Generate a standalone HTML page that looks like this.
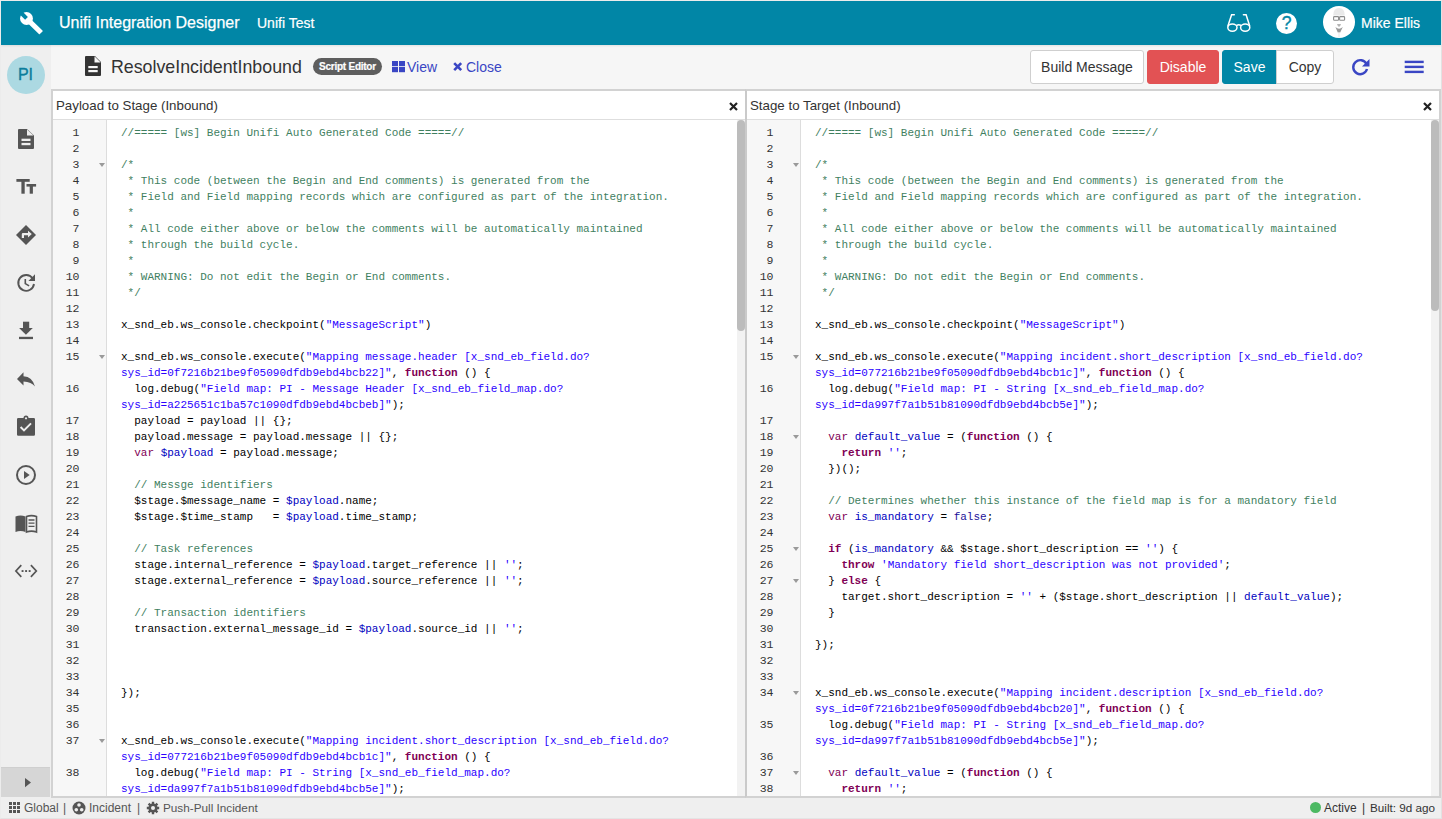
<!DOCTYPE html>
<html><head><meta charset="utf-8">
<style>
*{box-sizing:border-box;margin:0;padding:0}
html,body{width:1442px;height:819px;overflow:hidden;background:#efefef;font-family:"Liberation Sans",sans-serif;color:#333}
.abs{position:absolute}
#frame{position:absolute;left:0;top:0;width:1442px;height:819px;border:1px solid #ececec;border-right-color:#e2e2e2;border-bottom-color:#e4e4e4;pointer-events:none;z-index:50}
#hdr{position:absolute;left:1px;top:1px;width:1440px;height:44px;background:#0186a6;color:#fff;box-shadow:0 1px 2px rgba(0,0,0,0.09);z-index:5}
#hdr .t1{position:absolute;left:58px;top:13px;font-size:16px;white-space:nowrap;-webkit-text-stroke:0.25px #fff}
#hdr .t2{position:absolute;left:256px;top:14px;font-size:14px;white-space:nowrap;-webkit-text-stroke:0.2px #fff}
#hdr .me{position:absolute;left:1360px;top:14px;font-size:14px;white-space:nowrap;-webkit-text-stroke:0.2px #fff}
#side{position:absolute;left:1px;top:45px;width:50px;height:753px;background:#efefef}
#side .pi{position:absolute;left:5.5px;top:11px;width:38px;height:38px;border-radius:50%;background:#acd9e2;color:#0c7e9c;font-size:16px;text-align:center;line-height:37px;-webkit-text-stroke:0.35px #0c7e9c}
#side .tog{position:absolute;left:0;top:722px;width:49px;height:30px;background:#d6d6d6;border-top:1px solid #cfcfcf}
#tb{position:absolute;left:51px;top:45px;width:1390px;height:44px;background:#f6f6f6}
.docname{position:absolute;left:60px;top:12px;font-size:17.8px;color:#333;white-space:nowrap}
.badge{position:absolute;left:262px;top:13px;width:69px;height:17px;border-radius:9px;background:#5e5e5e;color:#fff;font-weight:bold;font-size:10px;text-align:center;line-height:18px;letter-spacing:-0.25px;-webkit-text-stroke:0.2px #fff}
.lnk{position:absolute;top:14px;font-size:14px;color:#3a46c4;white-space:nowrap}
.btn{position:absolute;top:5px;height:34px;font-size:14px;line-height:32px;text-align:center;border:1px solid #cfcfcf;border-radius:3px;background:#fff;color:#333;white-space:nowrap}
.panel{position:absolute;top:89px;height:709px;background:#fff;border:2px solid #d2d2d2}
.ph{position:absolute;left:0;top:0;right:0;height:29px;border-bottom:1px solid #dedede;background:#fff}
.ph .pt{position:absolute;left:3px;top:7px;font-size:13.3px;color:#333;white-space:nowrap}
.ph .px{position:absolute;top:11px;width:9px;height:9px}
.ed{position:absolute;left:0;top:29px;right:0;bottom:0;overflow:hidden;background:#fff}
.gut{position:absolute;left:0;top:0;width:54px;bottom:0;background:#f7f7f7;border-right:1px solid #ddd}
.gi{position:absolute;left:0;top:5px;width:53px}
.gl{height:16px;position:relative}
.ln{position:absolute;right:27px;top:0;font-family:"Liberation Mono",monospace;font-size:11.5px;letter-spacing:-0.3px;line-height:16px;color:#333}
.fd{position:absolute;left:45.5px;top:5.5px;width:0;height:0;border-left:3px solid transparent;border-right:3px solid transparent;border-top:4.5px solid #9a9a9a}
.code{position:absolute;left:68px;top:5px;font-family:"Liberation Mono",monospace;font-size:11px;line-height:16px;color:#000}
.cl{height:16px;white-space:pre}
.c{color:#3f7f5f}.s{color:#2a00ff}.k{color:#7f0055;font-weight:bold}.kv{color:#7f0055}.a{color:#221199}.v{color:#0000c0}
.sb{position:absolute;top:0;width:8px;bottom:0;background:#f2f2f2}
.thumb{position:absolute;left:0;width:8px;background:#bcbcbc;border-radius:4px}
#status{position:absolute;left:1px;top:798px;width:1440px;height:20px;background:#efefef;font-size:12px;color:#555;white-space:nowrap}
</style></head>
<body>
<div id="frame"></div>

<div id="hdr">
  <svg class="abs" style="left:0;top:0" width="60" height="44" viewBox="1 1 60 44"><defs><mask id="wm"><rect x="0" y="0" width="60" height="44" fill="#fff"/><path d="M27.9 16.9 L22.2 11.2 L19.4 14.0 L25.1 19.7 Z" fill="#000"/></mask></defs><g fill="#fff" mask="url(#wm)"><circle cx="26.5" cy="18.5" r="6.45"/><path d="M28.3 16.7 L42.5 30.4 Q43 30.9 42.5 31.4 L39.9 33.9 Q39.4 34.4 38.9 33.9 L24.7 20.3 Z"/></g></svg>
  <div class="t1">Unifi Integration Designer</div>
  <div class="t2">Unifi Test</div>
  <svg class="abs" style="left:1225px;top:12px" width="28" height="22" viewBox="1226 13 28 22"><g fill="none" stroke="#fff" stroke-width="1.5" stroke-linecap="round"><ellipse cx="1232.4" cy="27.6" rx="4.6" ry="3.6"/><ellipse cx="1245.2" cy="27.6" rx="4.6" ry="3.6"/><path d="M1236.9 25.2 Q1238.8 24.3 1240.7 25.2"/><path d="M1227.9 26 L1231.6 14.8 h2.7"/><path d="M1249.7 26 L1246.1 14.8 h-2.7"/></g></svg>
  <div class="abs" style="left:1275px;top:12px;width:21px;height:21px;border-radius:50%;background:#fff;color:#0186a6;font-size:17.5px;text-align:center;line-height:21px;-webkit-text-stroke:0.35px #0186a6">?</div>
  <svg class="abs" style="left:1321px;top:4px" width="34" height="34" viewBox="1322 5 34 34"><circle cx="1339" cy="22" r="16" fill="#fff"/><path d="M1333.2 15.4 Q1333.4 8 1339 8 Q1344.6 8 1344.8 15.4 Z" fill="#e9e9e9"/><g fill="none" stroke="#8c8c8c" stroke-width="1.1"><rect x="1333.6" y="16.6" width="5" height="3.7" rx="0.8"/><rect x="1339.6" y="16.6" width="5" height="3.7" rx="0.8"/></g><path d="M1337 24 h4 l-1.1 2.6 h-1.8z" fill="#b4b4b4"/><path d="M1335.4 27 Q1339 30.4 1342.8 27 L1340.2 32.4 h-2.4 Z" fill="#9a9a9a"/><rect x="1338.4" y="32.4" width="1.2" height="5" fill="#ececec"/></svg>
  <div class="me">Mike Ellis</div>
</div>

<div id="side">
  <div class="pi">PI</div>
  <svg class="abs" style="left:0;top:0" width="50" height="753" viewBox="1 45 50 753">
    <g fill="#555">
      <!-- doc -->
      <path d="M18 130 q0 -1 1 -1 h8 l7 6.5 v12.5 q0 1 -1 1 h-14 q-1 0 -1 -1z M27 129.5 v6 h6.5z" fill-rule="evenodd"/>
      <rect x="21.5" y="138.7" width="9" height="2.3" fill="#efefef"/>
      <rect x="21.5" y="142.9" width="9" height="2.3" fill="#efefef"/>
      <!-- Tt -->
      <rect x="16.4" y="179" width="13.3" height="2.8"/>
      <rect x="21.4" y="179" width="3.3" height="14.7"/>
      <rect x="26.5" y="184" width="9.6" height="2.6"/>
      <rect x="29.7" y="184" width="3.2" height="9.7"/>
      <!-- diamond -->
      <path d="M26 225 L36 235 L26 245 L16 235z"/>
      <path d="M21.8 238 V234.2 Q21.8 233 23 233 H28 V230.8 L31.8 234.1 L28 237.4 V235.2 H24 V238 Z" fill="#efefef"/>
      <!-- history -->
      <path d="M32.6 278.3 A7.9 7.9 0 1 0 34 284" fill="none" stroke="#555" stroke-width="1.9"/>
      <path d="M35 274.3 v6.6 h-6.6z"/>
      <path d="M25.3 279 v4.6 l3.8 2.3" fill="none" stroke="#555" stroke-width="1.6"/>
      <!-- download -->
      <rect x="23" y="321.7" width="6.2" height="7"/>
      <path d="M19.1 328 h13.7 l-6.85 6.7z"/>
      <rect x="19" y="336.8" width="14" height="2.3"/>
      <!-- reply -->
      <path d="M17 379 L23.5 372.2 v4 q9 0.5 11.5 10.4 q-3.5 -4.6 -11.5 -5 v4z"/>
      <!-- clipboard -->
      <path d="M18.2 418 h5.3 a2.5 2.5 0 0 1 5 0 h5.3 q1.2 0 1.2 1.2 v15.4 q0 1.2 -1.2 1.2 h-15.6 q-1.2 0 -1.2 -1.2 v-15.4 q0 -1.2 1.2 -1.2z"/>
      <circle cx="26" cy="418.3" r="1.1" fill="#efefef"/>
      <path d="M20.6 427 l3.4 3.4 l7 -7" fill="none" stroke="#efefef" stroke-width="2"/>
      <!-- play -->
      <circle cx="26" cy="475" r="9" fill="none" stroke="#555" stroke-width="2"/>
      <path d="M24 471 v8 l5.7 -4z"/>
      <!-- book -->
      <path d="M15.5 516.5 q5 -1.8 10 0 v15.5 q-5 -1.8 -10 0z"/>
      <path d="M26.5 516.5 q5 -1.8 10 0 v15.5 q-5 -1.8 -10 0z" fill="none" stroke="#555" stroke-width="1.6"/>
      <path d="M28.5 520 h6 M28.5 523.2 h6 M28.5 526.4 h6" stroke="#555" stroke-width="1.3"/>
      <!-- code -->
      <path d="M21.3 565.2 l-5.4 5.8 l5.4 5.8 M30.9 565.2 l5.4 5.8 l-5.4 5.8" fill="none" stroke="#555" stroke-width="1.7"/>
      <rect x="21.6" y="570.1" width="1.9" height="1.9"/><rect x="25.15" y="570.1" width="1.9" height="1.9"/><rect x="28.7" y="570.1" width="1.9" height="1.9"/>
    </g>
  </svg>
  <div class="tog"><svg class="abs" style="left:24px;top:10px" width="7" height="10" viewBox="0 0 7 10"><path d="M0 0 L6 4.6 L0 9.2z" fill="#555"/></svg></div>
</div>

<div id="tb">
  <svg class="abs" style="left:33px;top:10px" width="18" height="22" viewBox="0 0 18 22"><path d="M1 2 q0 -1 1 -1 h9 l6 6 v13 q0 1 -1 1 h-14 q-1 0 -1 -1z M10.5 1.3 v6.2 h6.2z" fill="#333" fill-rule="evenodd"/><rect x="4.3" y="11" width="9.4" height="2.2" fill="#f6f6f6"/><rect x="4.3" y="15" width="9.4" height="2.2" fill="#f6f6f6"/></svg>
  <div class="docname">ResolveIncidentInbound</div>
  <div class="badge">Script Editor</div>
  <svg class="abs" style="left:341px;top:16px" width="14" height="12" viewBox="0 0 14 12"><g fill="#3a46c4"><rect x="0" y="0" width="6" height="5.2"/><rect x="7" y="0" width="6" height="5.2"/><rect x="0" y="6" width="6" height="5.2"/><rect x="7" y="6" width="6" height="5.2"/></g></svg>
  <div class="lnk" style="left:356px">View</div>
  <svg class="abs" style="left:402px;top:17px" width="10" height="10" viewBox="0 0 10 10"><path d="M1.2 1.2 L8.2 8.2 M8.2 1.2 L1.2 8.2" stroke="#3a46c4" stroke-width="2.6"/></svg>
  <div class="lnk" style="left:415px">Close</div>
  <div class="btn" style="left:979px;width:114px">Build Message</div>
  <div class="btn" style="left:1096px;width:72px;background:#e25254;border-color:#e25254;color:#fff">Disable</div>
  <div class="btn" style="left:1171px;width:55px;background:#0186a6;border-color:#0186a6;color:#fff;border-radius:3px 0 0 3px">Save</div>
  <div class="btn" style="left:1225px;width:58px;border-radius:0 3px 3px 0">Copy</div>
  <svg class="abs" style="left:1300px;top:12px" width="20" height="20" viewBox="0 0 20 20"><path d="M15.5 7 A7 7 0 1 0 16 12" fill="none" stroke="#3a46c4" stroke-width="2.4"/><path d="M18.5 2 v7.5 h-7.5z" fill="#3a46c4"/></svg>
  <svg class="abs" style="left:1353px;top:15px" width="20" height="14" viewBox="0 0 20 14"><g fill="#3a46c4"><rect x="0.7" y="0.7" width="19" height="2.4"/><rect x="0.7" y="5.7" width="19" height="2.4"/><rect x="0.7" y="10.7" width="19" height="2.4"/></g></svg>
</div>

<!-- left panel -->
<div class="panel" style="left:51px;width:696px;border-right:0">
  <div class="ph"><div class="pt">Payload to Stage (Inbound)</div>
    <svg class="px" style="left:676px" viewBox="0 0 9 9"><path d="M1 1 L8 8 M8 1 L1 8" stroke="#222" stroke-width="2.2"/></svg></div>
  <div class="ed">
    <div class="gut"><div class="gi">
<div class="gl"><span class="ln">1</span></div>
<div class="gl"><span class="ln">2</span></div>
<div class="gl"><span class="ln">3</span><i class="fd"></i></div>
<div class="gl"><span class="ln">4</span></div>
<div class="gl"><span class="ln">5</span></div>
<div class="gl"><span class="ln">6</span></div>
<div class="gl"><span class="ln">7</span></div>
<div class="gl"><span class="ln">8</span></div>
<div class="gl"><span class="ln">9</span></div>
<div class="gl"><span class="ln">10</span></div>
<div class="gl"><span class="ln">11</span></div>
<div class="gl"><span class="ln">12</span></div>
<div class="gl"><span class="ln">13</span></div>
<div class="gl"><span class="ln">14</span></div>
<div class="gl"><span class="ln">15</span><i class="fd"></i></div>
<div class="gl"></div>
<div class="gl"><span class="ln">16</span></div>
<div class="gl"></div>
<div class="gl"><span class="ln">17</span></div>
<div class="gl"><span class="ln">18</span></div>
<div class="gl"><span class="ln">19</span></div>
<div class="gl"><span class="ln">20</span></div>
<div class="gl"><span class="ln">21</span></div>
<div class="gl"><span class="ln">22</span></div>
<div class="gl"><span class="ln">23</span></div>
<div class="gl"><span class="ln">24</span></div>
<div class="gl"><span class="ln">25</span></div>
<div class="gl"><span class="ln">26</span></div>
<div class="gl"><span class="ln">27</span></div>
<div class="gl"><span class="ln">28</span></div>
<div class="gl"><span class="ln">29</span></div>
<div class="gl"><span class="ln">30</span></div>
<div class="gl"><span class="ln">31</span></div>
<div class="gl"><span class="ln">32</span></div>
<div class="gl"><span class="ln">33</span></div>
<div class="gl"><span class="ln">34</span></div>
<div class="gl"><span class="ln">35</span></div>
<div class="gl"><span class="ln">36</span></div>
<div class="gl"><span class="ln">37</span><i class="fd"></i></div>
<div class="gl"></div>
<div class="gl"><span class="ln">38</span></div>
<div class="gl"></div>
    </div></div>
    <div class="code">
<div class="cl"><span class="c">//===== [ws] Begin Unifi Auto Generated Code =====//</span></div>
<div class="cl">&#8203;</div>
<div class="cl"><span class="c">/*</span></div>
<div class="cl"><span class="c"> * This code (between the Begin and End comments) is generated from the</span></div>
<div class="cl"><span class="c"> * Field and Field mapping records which are configured as part of the integration.</span></div>
<div class="cl"><span class="c"> *</span></div>
<div class="cl"><span class="c"> * All code either above or below the comments will be automatically maintained</span></div>
<div class="cl"><span class="c"> * through the build cycle.</span></div>
<div class="cl"><span class="c"> *</span></div>
<div class="cl"><span class="c"> * WARNING: Do not edit the Begin or End comments.</span></div>
<div class="cl"><span class="c"> */</span></div>
<div class="cl">&#8203;</div>
<div class="cl">x_snd_eb.ws_console.checkpoint(<span class="s">&quot;MessageScript&quot;</span>)</div>
<div class="cl">&#8203;</div>
<div class="cl">x_snd_eb.ws_console.execute(<span class="s">&quot;Mapping message.header [x_snd_eb_field.do?</span></div>
<div class="cl"><span class="s">sys_id=0f7216b21be9f05090dfdb9ebd4bcb22]&quot;</span>, <span class="k">function</span> () {</div>
<div class="cl">  log.debug(<span class="s">&quot;Field map: PI - Message Header [x_snd_eb_field_map.do?</span></div>
<div class="cl"><span class="s">sys_id=a225651c1ba57c1090dfdb9ebd4bcbeb]&quot;</span>);</div>
<div class="cl">  payload = payload || {};</div>
<div class="cl">  payload.message = payload.message || {};</div>
<div class="cl">  <span class="kv">var</span> <span class="v">$payload</span> = payload.message;</div>
<div class="cl">&#8203;</div>
<div class="cl">  <span class="c">// Messge identifiers</span></div>
<div class="cl">  $stage.$message_name = <span class="v">$payload</span>.name;</div>
<div class="cl">  $stage.$time_stamp   = <span class="v">$payload</span>.time_stamp;</div>
<div class="cl">&#8203;</div>
<div class="cl">  <span class="c">// Task references</span></div>
<div class="cl">  stage.internal_reference = <span class="v">$payload</span>.target_reference || <span class="s">&#x27;&#x27;</span>;</div>
<div class="cl">  stage.external_reference = <span class="v">$payload</span>.source_reference || <span class="s">&#x27;&#x27;</span>;</div>
<div class="cl">&#8203;</div>
<div class="cl">  <span class="c">// Transaction identifiers</span></div>
<div class="cl">  transaction.external_message_id = <span class="v">$payload</span>.source_id || <span class="s">&#x27;&#x27;</span>;</div>
<div class="cl">&#8203;</div>
<div class="cl">&#8203;</div>
<div class="cl">&#8203;</div>
<div class="cl">});</div>
<div class="cl">&#8203;</div>
<div class="cl">&#8203;</div>
<div class="cl">x_snd_eb.ws_console.execute(<span class="s">&quot;Mapping incident.short_description [x_snd_eb_field.do?</span></div>
<div class="cl"><span class="s">sys_id=077216b21be9f05090dfdb9ebd4bcb1c]&quot;</span>, <span class="k">function</span> () {</div>
<div class="cl">  log.debug(<span class="s">&quot;Field map: PI - String [x_snd_eb_field_map.do?</span></div>
<div class="cl"><span class="s">sys_id=da997f7a1b51b81090dfdb9ebd4bcb5e]&quot;</span>);</div>
    </div>
    <div class="sb" style="left:684px"><div class="thumb" style="top:0;height:211px"></div></div>
  </div>
</div>
<div class="abs" style="left:745px;top:89px;width:2px;height:709px;background:#cacaca"></div>
<!-- right panel -->
<div class="panel" style="left:745px;width:696px;border-left:2px solid #cacaca">
  <div class="ph"><div class="pt">Stage to Target (Inbound)</div>
    <svg class="px" style="left:676px" viewBox="0 0 9 9"><path d="M1 1 L8 8 M8 1 L1 8" stroke="#222" stroke-width="2.2"/></svg></div>
  <div class="ed">
    <div class="gut"><div class="gi">
<div class="gl"><span class="ln">1</span></div>
<div class="gl"><span class="ln">2</span></div>
<div class="gl"><span class="ln">3</span><i class="fd"></i></div>
<div class="gl"><span class="ln">4</span></div>
<div class="gl"><span class="ln">5</span></div>
<div class="gl"><span class="ln">6</span></div>
<div class="gl"><span class="ln">7</span></div>
<div class="gl"><span class="ln">8</span></div>
<div class="gl"><span class="ln">9</span></div>
<div class="gl"><span class="ln">10</span></div>
<div class="gl"><span class="ln">11</span></div>
<div class="gl"><span class="ln">12</span></div>
<div class="gl"><span class="ln">13</span></div>
<div class="gl"><span class="ln">14</span></div>
<div class="gl"><span class="ln">15</span><i class="fd"></i></div>
<div class="gl"></div>
<div class="gl"><span class="ln">16</span></div>
<div class="gl"></div>
<div class="gl"><span class="ln">17</span></div>
<div class="gl"><span class="ln">18</span><i class="fd"></i></div>
<div class="gl"><span class="ln">19</span></div>
<div class="gl"><span class="ln">20</span></div>
<div class="gl"><span class="ln">21</span></div>
<div class="gl"><span class="ln">22</span></div>
<div class="gl"><span class="ln">23</span></div>
<div class="gl"><span class="ln">24</span></div>
<div class="gl"><span class="ln">25</span><i class="fd"></i></div>
<div class="gl"><span class="ln">26</span></div>
<div class="gl"><span class="ln">27</span><i class="fd"></i></div>
<div class="gl"><span class="ln">28</span></div>
<div class="gl"><span class="ln">29</span></div>
<div class="gl"><span class="ln">30</span></div>
<div class="gl"><span class="ln">31</span></div>
<div class="gl"><span class="ln">32</span></div>
<div class="gl"><span class="ln">33</span></div>
<div class="gl"><span class="ln">34</span><i class="fd"></i></div>
<div class="gl"></div>
<div class="gl"><span class="ln">35</span></div>
<div class="gl"></div>
<div class="gl"><span class="ln">36</span></div>
<div class="gl"><span class="ln">37</span><i class="fd"></i></div>
<div class="gl"><span class="ln">38</span></div>
    </div></div>
    <div class="code">
<div class="cl"><span class="c">//===== [ws] Begin Unifi Auto Generated Code =====//</span></div>
<div class="cl">&#8203;</div>
<div class="cl"><span class="c">/*</span></div>
<div class="cl"><span class="c"> * This code (between the Begin and End comments) is generated from the</span></div>
<div class="cl"><span class="c"> * Field and Field mapping records which are configured as part of the integration.</span></div>
<div class="cl"><span class="c"> *</span></div>
<div class="cl"><span class="c"> * All code either above or below the comments will be automatically maintained</span></div>
<div class="cl"><span class="c"> * through the build cycle.</span></div>
<div class="cl"><span class="c"> *</span></div>
<div class="cl"><span class="c"> * WARNING: Do not edit the Begin or End comments.</span></div>
<div class="cl"><span class="c"> */</span></div>
<div class="cl">&#8203;</div>
<div class="cl">x_snd_eb.ws_console.checkpoint(<span class="s">&quot;MessageScript&quot;</span>)</div>
<div class="cl">&#8203;</div>
<div class="cl">x_snd_eb.ws_console.execute(<span class="s">&quot;Mapping incident.short_description [x_snd_eb_field.do?</span></div>
<div class="cl"><span class="s">sys_id=077216b21be9f05090dfdb9ebd4bcb1c]&quot;</span>, <span class="k">function</span> () {</div>
<div class="cl">  log.debug(<span class="s">&quot;Field map: PI - String [x_snd_eb_field_map.do?</span></div>
<div class="cl"><span class="s">sys_id=da997f7a1b51b81090dfdb9ebd4bcb5e]&quot;</span>);</div>
<div class="cl">&#8203;</div>
<div class="cl">  <span class="kv">var</span> <span class="v">default_value</span> = (<span class="k">function</span> () {</div>
<div class="cl">    <span class="k">return</span> <span class="s">&#x27;&#x27;</span>;</div>
<div class="cl">  })();</div>
<div class="cl">&#8203;</div>
<div class="cl">  <span class="c">// Determines whether this instance of the field map is for a mandatory field</span></div>
<div class="cl">  <span class="kv">var</span> <span class="v">is_mandatory</span> = <span class="a">false</span>;</div>
<div class="cl">&#8203;</div>
<div class="cl">  <span class="k">if</span> (<span class="v">is_mandatory</span> &amp;&amp; $stage.short_description == <span class="s">&#x27;&#x27;</span>) {</div>
<div class="cl">    <span class="k">throw</span> <span class="s">&#x27;Mandatory field short_description was not provided&#x27;</span>;</div>
<div class="cl">  } <span class="k">else</span> {</div>
<div class="cl">    target.short_description = <span class="s">&#x27;&#x27;</span> + ($stage.short_description || <span class="v">default_value</span>);</div>
<div class="cl">  }</div>
<div class="cl">&#8203;</div>
<div class="cl">});</div>
<div class="cl">&#8203;</div>
<div class="cl">&#8203;</div>
<div class="cl">x_snd_eb.ws_console.execute(<span class="s">&quot;Mapping incident.description [x_snd_eb_field.do?</span></div>
<div class="cl"><span class="s">sys_id=0f7216b21be9f05090dfdb9ebd4bcb20]&quot;</span>, <span class="k">function</span> () {</div>
<div class="cl">  log.debug(<span class="s">&quot;Field map: PI - String [x_snd_eb_field_map.do?</span></div>
<div class="cl"><span class="s">sys_id=da997f7a1b51b81090dfdb9ebd4bcb5e]&quot;</span>);</div>
<div class="cl">&#8203;</div>
<div class="cl">  <span class="kv">var</span> <span class="v">default_value</span> = (<span class="k">function</span> () {</div>
<div class="cl">    <span class="k">return</span> <span class="s">&#x27;&#x27;</span>;</div>
    </div>
    <div class="sb" style="left:684px"><div class="thumb" style="top:0;height:191px"></div></div>
  </div>
</div>

<div id="status">
  <svg class="abs" style="left:8px;top:4px" width="12" height="12" viewBox="0 0 12 12"><g fill="#555"><rect x="0" y="0" width="3" height="3"/><rect x="4" y="0" width="3" height="3"/><rect x="8" y="0" width="3" height="3"/><rect x="0" y="4" width="3" height="3"/><rect x="4" y="4" width="3" height="3"/><rect x="8" y="4" width="3" height="3"/><rect x="0" y="8" width="3" height="3"/><rect x="4" y="8" width="3" height="3"/><rect x="8" y="8" width="3" height="3"/></g></svg>
  <span class="abs" style="left:23px;top:3px">Global</span>
  <span class="abs" style="left:62px;top:3px">|</span>
  <svg class="abs" style="left:71px;top:3px" width="14" height="14" viewBox="0 0 14 14"><circle cx="7" cy="7" r="6.5" fill="#555"/><circle cx="7" cy="4" r="1.8" fill="#efefef"/><circle cx="4.3" cy="8.8" r="1.8" fill="#efefef"/><circle cx="9.7" cy="8.8" r="1.8" fill="#efefef"/></svg>
  <span class="abs" style="left:88px;top:3px">Incident</span>
  <span class="abs" style="left:136px;top:3px">|</span>
  <svg class="abs" style="left:145px;top:3px" width="14" height="14" viewBox="0 0 14 14"><g fill="#555"><circle cx="7" cy="7" r="4.6"/><g stroke="#555" stroke-width="2.4"><path d="M7 0.8 v12.4 M0.8 7 h12.4 M2.6 2.6 l8.8 8.8 M11.4 2.6 l-8.8 8.8"/></g></g><circle cx="7" cy="7" r="2" fill="#efefef"/></svg>
  <span class="abs" style="left:162px;top:3px;font-size:11.75px">Push-Pull Incident</span>
  <div class="abs" style="left:1309px;top:4px;width:11px;height:11px;border-radius:50%;background:#4cb963"></div>
  <span class="abs" style="left:1323px;top:3px;color:#333">Active</span>
  <span class="abs" style="left:1361px;top:3px;color:#333">|</span>
  <span class="abs" style="left:1369px;top:3px;color:#333;font-size:11.7px">Built: 9d ago</span>
</div>
</body></html>
